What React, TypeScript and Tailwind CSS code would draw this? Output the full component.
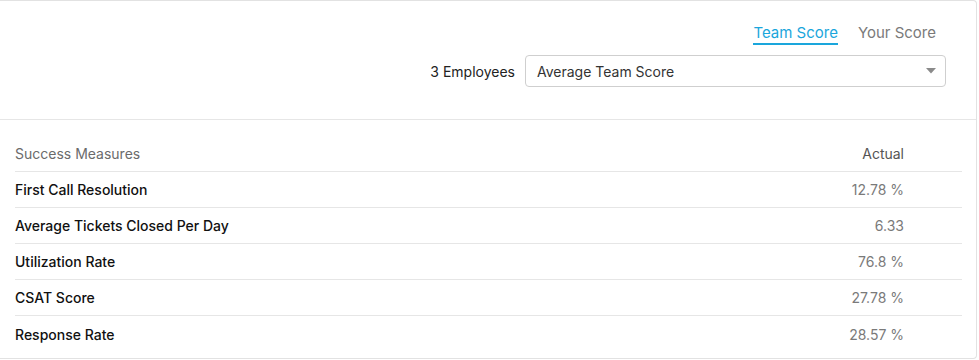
import React from "react";

const rows = [
  { name: "First Call Resolution", value: "12.78 %" },
  { name: "Average Tickets Closed Per Day", value: "6.33" },
  { name: "Utilization Rate", value: "76.8 %" },
  { name: "CSAT Score", value: "27.78 %" },
  { name: "Response Rate", value: "28.57 %" },
];

export default function App() {
  return (
    <div className="w-[979px] h-[360px] bg-white" style={{ fontFamily: "Inter, 'Noto Sans', sans-serif" }}>
      <div className="w-[977px] h-[359px] border-t border-r border-b border-[#e2e2e2] rounded-tr-[4px] rounded-br-[4px] bg-white">
        <div className="h-[119px] border-b border-[#e6e6e6] flex flex-col items-end pt-[22px] pr-[30px]">
          <div className="flex items-center gap-[20px] pr-[10px]">
            <div className="text-[15px] leading-[20px] text-[#1aa6dc] border-b-2 border-[#1aa6dc] pb-0">Team Score</div>
            <div className="text-[15px] leading-[20px] text-[#7a7a7a] border-b-2 border-transparent">Your Score</div>
          </div>
          <div className="flex items-center mt-[10px] gap-[10px]">
            <span className="text-[14px] text-[#222]">3 Employees</span>
            <div className="w-[421px] h-[32px] border border-[#cfcfcf] rounded-[4px] flex items-center justify-between pl-[11px] pr-[9px]">
              <span className="text-[14px] text-[#333]">Average Team Score</span>
              <svg width="10" height="6" viewBox="0 0 10 6">
                <path d="M0 0 L10 0 L5 5.5 Z" fill="#8a8a8a" />
              </svg>
            </div>
          </div>
        </div>
        <div className="mt-[16px] ml-[15px] mr-[14px]">
          <div className="h-[36px] flex items-center justify-between border-b border-[#e6e6e6] pr-[58px]">
            <span className="text-[14px] text-[#6b6b6b]">Success Measures</span>
            <span className="text-[14px] text-[#555]">Actual</span>
          </div>
          {rows.map((r, i) => (
            <div
              key={r.name}
              className={
                i < rows.length - 1
                  ? "h-[36px] flex items-center justify-between border-b border-[#e6e6e6] pr-[58px]"
                  : "h-[36px] flex items-center justify-between pr-[58px]"
              }
            >
              <span className="text-[14px] font-medium text-[#111]">{r.name}</span>
              <span className="text-[14px] text-[#7a7a7a]">{r.value}</span>
            </div>
          ))}
        </div>
      </div>
    </div>
  );
}
